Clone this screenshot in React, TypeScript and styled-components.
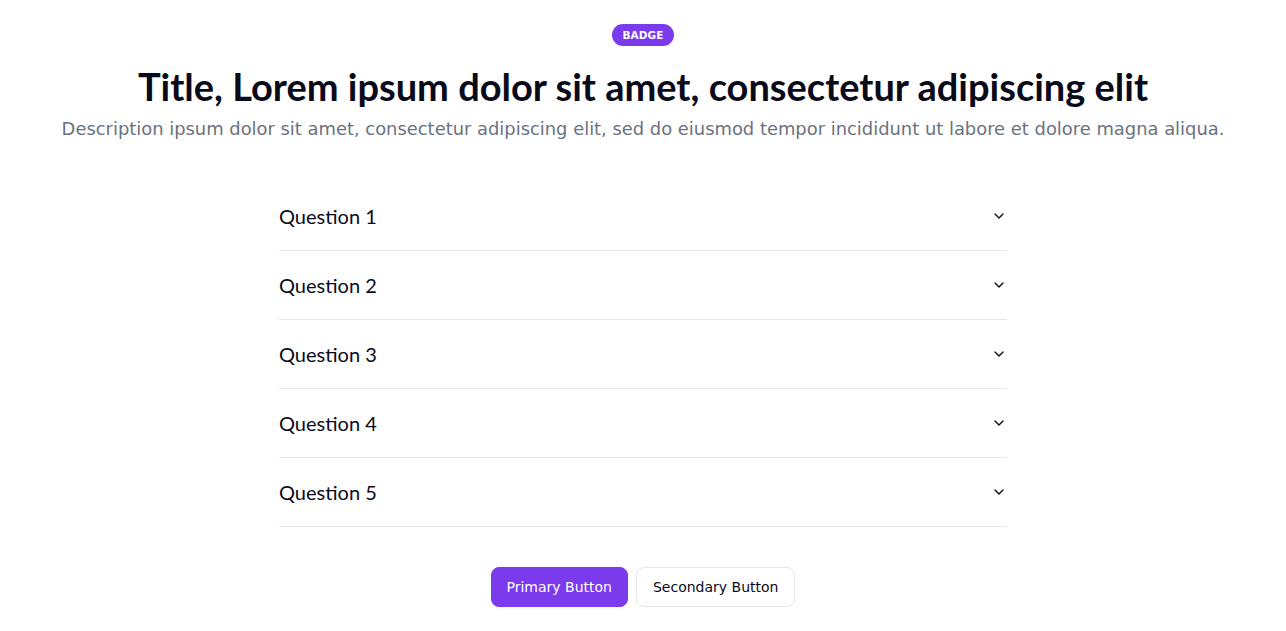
import React from "react";
import styled, { createGlobalStyle } from "styled-components";
import { ChevronDown } from "lucide-react";

const Global = createGlobalStyle`
  html, body { margin: 0; padding: 0; background: #ffffff; }
  * { box-sizing: border-box; }
`;

const Section = styled.section`
  display: flex;
  flex-direction: column;
  align-items: center;
  padding: 24px 16px 24px;
  font-family: "DejaVu Sans", sans-serif;
`;

const Badge = styled.span`
  display: inline-flex;
  align-items: center;
  height: 22px;
  padding: 0 10px;
  border-radius: 999px;
  background: #7c3aed;
  color: #ffffff;
  font-family: "DejaVu Sans", sans-serif;
  font-weight: 700;
  font-size: 10.5px;
  letter-spacing: 0.1px;
`;

const Title = styled.h1`
  margin: 18px 0 0;
  font-family: "Lato", sans-serif;
  font-weight: 700;
  font-size: 38px;
  line-height: 44px;
  color: #0a0b1a;
  text-align: center;
`;

const Description = styled.p`
  margin: 7px 0 0;
  font-family: "DejaVu Sans", sans-serif;
  font-size: 17.9px;
  line-height: 28px;
  color: #6b7280;
  text-align: center;
  white-space: nowrap;
`;

const Accordion = styled.div`
  width: 728px;
  margin-top: 39px;
  display: flex;
  flex-direction: column;
`;

const Row = styled.div`
  height: 69px;
  display: flex;
  align-items: center;
  justify-content: space-between;
  border-bottom: 1px solid #e5e7eb;
  padding-bottom: 1px;
`;

const Question = styled.span`
  font-family: "Lato", sans-serif;
  font-size: 20px;
  color: #0a0b1a;
`;

const Icon = styled(ChevronDown)`
  width: 16px;
  height: 16px;
  color: #0a0b1a;
`;

const Actions = styled.div`
  display: flex;
  gap: 8px;
  margin-top: 40px;
`;

const Button = styled.button<{ $primary?: boolean }>`
  height: 40px;
  padding: 0 ${(p) => (p.$primary ? "15px" : "16px")};
  border-radius: 8px;
  font-family: "DejaVu Sans", sans-serif;
  font-size: 14px;
  font-weight: 500;
  cursor: pointer;
  background: ${(p) => (p.$primary ? "#7c3aed" : "#ffffff")};
  color: ${(p) => (p.$primary ? "#ffffff" : "#0a0b1a")};
  border: 1px solid ${(p) => (p.$primary ? "#7c3aed" : "#e5e7eb")};
`;

const questions = ["Question 1", "Question 2", "Question 3", "Question 4", "Question 5"];

export default function App() {
  return (
    <>
      <Global />
      <Section>
        <Badge>BADGE</Badge>
        <Title>Title, Lorem ipsum dolor sit amet, consectetur adipiscing elit</Title>
        <Description>
          Description ipsum dolor sit amet, consectetur adipiscing elit, sed do eiusmod tempor incididunt ut labore et dolore magna aliqua.
        </Description>
        <Accordion>
          {questions.map((q) => (
            <Row key={q}>
              <Question>{q}</Question>
              <Icon strokeWidth={2} />
            </Row>
          ))}
        </Accordion>
        <Actions>
          <Button $primary>Primary Button</Button>
          <Button>Secondary Button</Button>
        </Actions>
      </Section>
    </>
  );
}
